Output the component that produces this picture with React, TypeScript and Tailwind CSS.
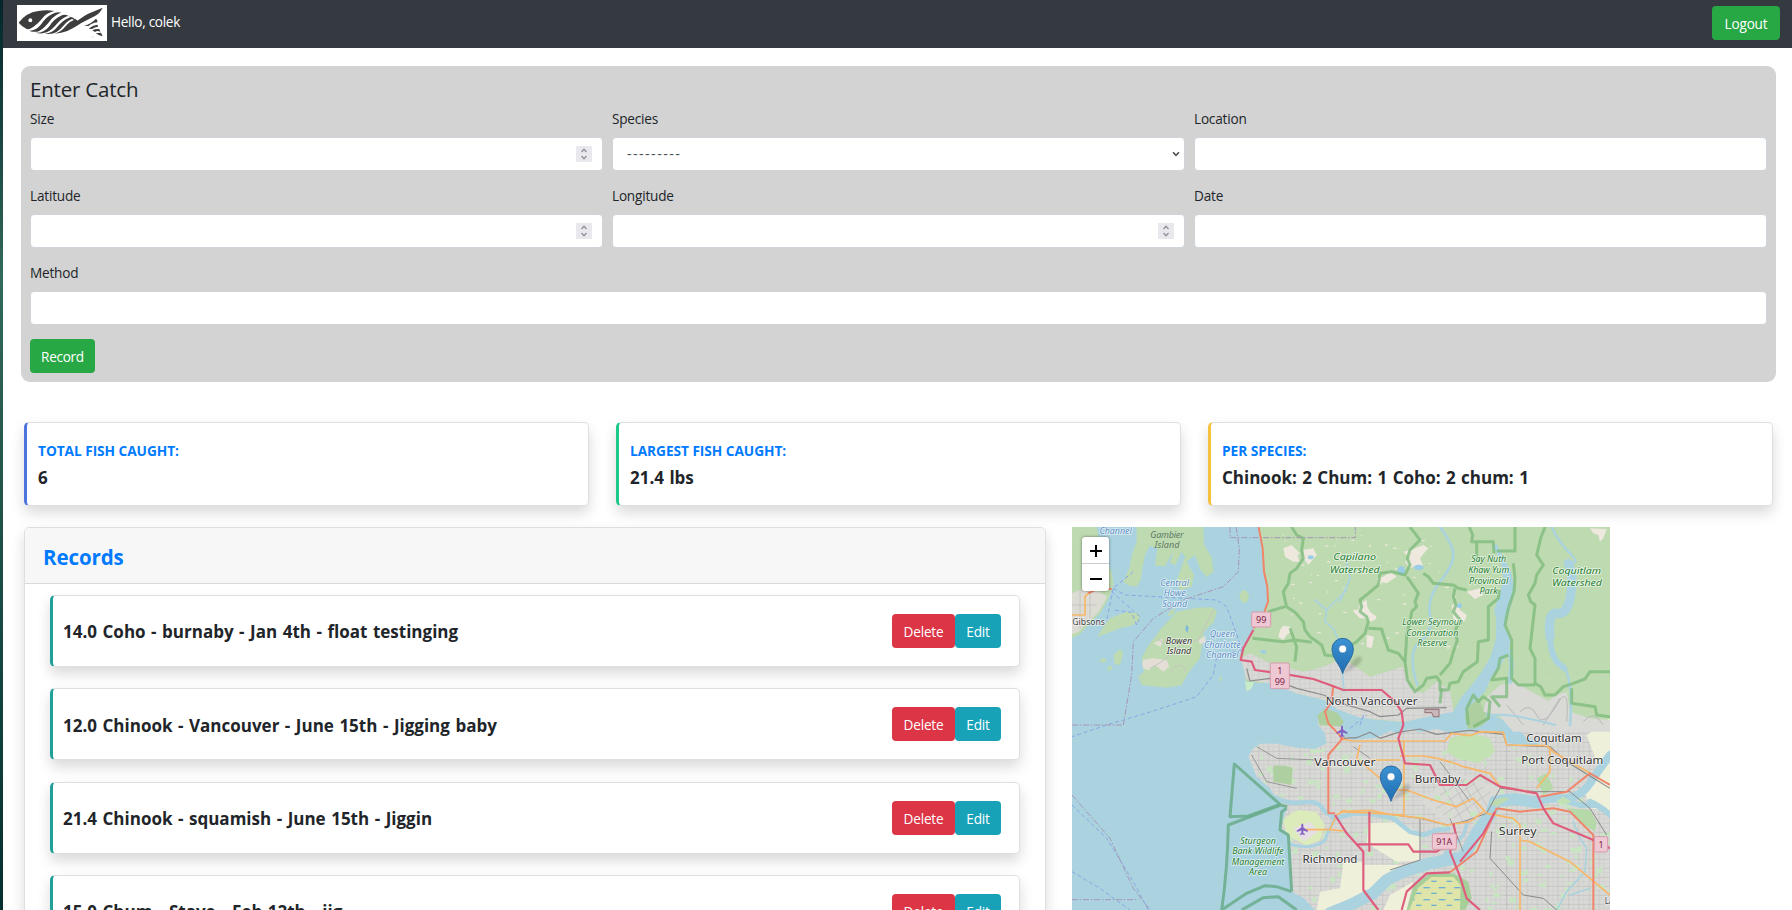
import React from "react";

const forms = {
  label: "text-[13.6px] leading-[22px] tracking-[-0.2px] text-[#212529]",
  input: "mt-[7px] flex h-[34px] items-center rounded-[4px] border border-[#ced4da] bg-white",
};

function Spinner() {
  return (
    <svg className="mr-[10px] ml-auto h-4 w-4 bg-[#e9e9ed]" viewBox="0 0 16 16" fill="none" stroke="#8f8f9d" strokeWidth="1.3">
      <path d="M5.5 6 8 3.3 10.5 6M5.5 10 8 12.7 10.5 10" />
    </svg>
  );
}

function Field({ label, kind = "text", className = "" }: { label: string; kind?: string; className?: string }) {
  return (
    <div className={`h-[77px] ${className}`}>
      <div className={forms.label}>{label}</div>
      <div className={forms.input}>
        {kind === "number" && <Spinner />}
        {kind === "select" && (
          <>
            <span className="pl-[14px] text-[14.4px] tracking-[1.4px] text-[#495057]">---------</span>
            <svg className="mr-[4px] ml-auto h-2 w-2" viewBox="0 0 8 8" fill="none" stroke="#495057" strokeWidth="1.6">
              <path d="M1 2.2 4 5.4 7 2.2" />
            </svg>
          </>
        )}
      </div>
    </div>
  );
}

function Fish() {
  return (
    <svg className="h-9 w-[90px] bg-white" viewBox="51 15 270 108" fill="#3d3d3d">
      <path fillRule="evenodd" d="M56 68Q78 38 115 33Q140 29 163 33Q143 38 131 50Q116 68 107 75Q91 90 80 87Q66 80 56 68ZM97 61a6 6 0 1 0-12 0a6 6 0 1 0 12 0Z" />
      <path d="M87 92Q105 94 121 76Q138 50 157 42Q168 35 184 38Q166 43 152 60Q133 85 119 92Q106 99 87 92Z" />
      <path d="M106 98Q130 100 147 80Q163 55 183 47Q193 42 205 47Q187 53 173 69Q154 92 140 97Q124 103 106 98Z" />
      <path d="M135 101Q158 99 171 82Q188 60 207 53Q215 50 222 55Q205 60 193 74Q176 94 163 99Q150 103 135 101Z" />
      <path d="M164 101Q183 96 194 82Q209 63 228 58L231 63Q254 47 268 40Q291 30 308 23Q300 40 285 48Q265 58 244 69Q218 86 202 93Q184 100 164 101Z" />
      <path d="M205 49Q222 54 233 62L228 66Q219 58 205 49Z" />
      <path d="M252 77Q273 73 287 57Q293 58 292 67Q273 70 266 78ZM266 86Q278 75 293 74L294 80Q284 81 276 87ZM277 91Q285 86 298 87L301 95Q291 91 285 96ZM287 100L303 98L308 109Q298 107 287 100Z" />
      <path d="M272 112l10-3-3 5Z" fill="#ddd" />
    </svg>
  );
}

const stats = [
  { title: "TOTAL FISH CAUGHT:", value: "6", edge: "border-l-[#4e73df]" },
  { title: "LARGEST FISH CAUGHT:", value: "21.4 lbs", edge: "border-l-[#1cc88a]" },
  { title: "PER SPECIES:", value: "Chinook: 2 Chum: 1 Coho: 2 chum: 1", edge: "border-l-[#f6c23e]" },
];

const records = [
  "14.0 Coho - burnaby - Jan 4th - float testinging",
  "12.0 Chinook - Vancouver - June 15th - Jigging baby",
  "21.4 Chinook - squamish - June 15th - Jiggin",
  "15.0 Chum - Stave - Feb 12th - jig",
];

type LabelProps = { x: number; y: number; w: number; t: string; k?: "city" | "green" | "water" | "isle" | "small" };

function MapLabel({ x, y, w, t, k = "city" }: LabelProps) {
  const styles = {
    city: { fill: "#333", size: 32, italic: false },
    green: { fill: "#1f8030", size: 27, italic: true },
    water: { fill: "#5b8fc6", size: 27, italic: true },
    isle: { fill: "#333", size: 27, italic: true },
    small: { fill: "#444", size: 27, italic: false },
  };
  const s = styles[k];
  return (
    <text
      x={x} y={y} textAnchor="middle" textLength={w} lengthAdjust="spacingAndGlyphs" fontSize={s.size}
      fontStyle={s.italic ? "italic" : "normal"} fill={s.fill} stroke="#fff" strokeOpacity="0.65" strokeWidth="5"
      strokeLinejoin="round" paintOrder="stroke"
    >
      {t}
    </text>
  );
}

const labels: LabelProps[] = [
  { x: 137, y: 28, w: 97, t: "Channel", k: "water" },
  { x: 314, y: 183, w: 86, t: "Central", k: "water" },
  { x: 314, y: 214, w: 66, t: "Howe", k: "water" },
  { x: 314, y: 246, w: 75, t: "Sound", k: "water" },
  { x: 457, y: 336, w: 76, t: "Queen", k: "water" },
  { x: 457, y: 368, w: 110, t: "Charlotte", k: "water" },
  { x: 457, y: 400, w: 98, t: "Channel", k: "water" },
  { x: 56, y: 300, w: 98, t: "Gibsons", k: "small" },
  { x: 327, y: 356, w: 79, t: "Bowen", k: "isle" },
  { x: 327, y: 388, w: 74, t: "Island", k: "isle" },
  { x: 854, y: 106, w: 128, t: "Capilano", k: "green" },
  { x: 854, y: 144, w: 150, t: "Watershed", k: "green" },
  { x: 1256, y: 112, w: 105, t: "Say Nuth", k: "green" },
  { x: 1256, y: 144, w: 123, t: "Khaw Yum", k: "green" },
  { x: 1256, y: 176, w: 118, t: "Provincial", k: "green" },
  { x: 1256, y: 208, w: 55, t: "Park", k: "green" },
  { x: 1520, y: 146, w: 146, t: "Coquitlam", k: "green" },
  { x: 1521, y: 184, w: 150, t: "Watershed", k: "green" },
  { x: 1087, y: 300, w: 180, t: "Lower Seymour", k: "green" },
  { x: 1087, y: 332, w: 156, t: "Conservation", k: "green" },
  { x: 1087, y: 363, w: 90, t: "Reserve", k: "green" },
  { x: 564, y: 957, w: 107, t: "Sturgeon", k: "green" },
  { x: 564, y: 988, w: 155, t: "Bank Wildlife", k: "green" },
  { x: 564, y: 1019, w: 158, t: "Management", k: "green" },
  { x: 564, y: 1051, w: 54, t: "Area", k: "green" },
  { x: 905, y: 541, w: 275, t: "North Vancouver" },
  { x: 825, y: 722, w: 184, t: "Vancouver" },
  { x: 1103, y: 773, w: 137, t: "Burnaby" },
  { x: 1452, y: 650, w: 166, t: "Coquitlam" },
  { x: 1477, y: 716, w: 246, t: "Port Coquitlam" },
  { x: 1343, y: 930, w: 113, t: "Surrey" },
  { x: 780, y: 1014, w: 165, t: "Richmond" },
  { x: 1617, y: 1138, w: 26, t: "La", k: "small" },
];

function Shield({ x, y, w, h, lines }: { x: number; y: number; w: number; h: number; lines: string[] }) {
  return (
    <g>
      <rect x={x} y={y} width={w} height={h} rx="4" fill="#eec8d2" stroke="#d59aad" strokeWidth="3" />
      {lines.map((t, i) => (
        <text key={i} x={x + w / 2} y={y + 33 + i * 32} textAnchor="middle" fontSize="27" fill="#7c2547">{t}</text>
      ))}
    </g>
  );
}

function Plane({ x, y }: { x: number; y: number }) {
  return (
    <path
      transform={`translate(${x} ${y}) scale(1.5)`} fill="#8461c4"
      d="M0-11Q2-11 2-7V-3L11 3V6L2 3V8L5 10V12L0 11-5 12V10L-2 8V3L-11 6V3L-2-3V-7Q-2-11 0-11Z"
    />
  );
}

function Marker({ x, y }: { x: number; y: number }) {
  return (
    <g transform={`translate(${x} ${y})`}>
      <path d="M0 0L28-36Q44-56 56-50Q62-38 42-22Z" fill="#000" opacity="0.16" filter="url(#soft)" />
      <path d="M0 0C-8-28-32-45-32-74A32 32 0 0 1 32-74C32-45 8-28 0 0Z" fill="url(#pin)" stroke="#2e6da3" strokeWidth="3" />
      <circle cx="0" cy="-74" r="12" fill="#fff" stroke="#2b73b0" strokeWidth="2" />
    </g>
  );
}

const patches = Array.from({ length: 300 }, (_, i) => ({
  x: 560 + ((i * 379) % 1060),
  y: 660 + ((i * 211 + ((i * i) % 37) * 9) % 495),
  w: 6 + ((i * 7) % 15),
  h: 6 + ((i * 5) % 11),
}));

const cleared = Array.from({ length: 60 }, (_, i) => ({
  x: 640 + ((i * 283) % 540),
  y: 30 + ((i * 97 + ((i * i) % 29) * 11) % 360),
  w: 2 + ((i * 7) % 6),
  h: 2 + ((i * 5) % 5),
}));

const southLand =
  "M535 695L548 672 570 656 620 656 680 668 735 672 770 655 765 625 745 600 745 570 765 560 800 570 815 600 812 628 850 645 880 642 920 638 960 618 985 625 1020 612 1050 622 1100 612 1150 626 1200 615 1270 618 1305 628 1310 655 1400 662 1412 648 1370 640 1345 610 1300 575 1240 560 1252 515 1290 480 1330 470 1620 450V1155H735L700 1118 665 1100 660 960 655 925 635 912 640 880 652 850 630 838 600 790 560 755Z";

function VancouverMap() {
  return (
    <svg className="block h-full w-full" viewBox="6 6 1614 1149" preserveAspectRatio="none" fontFamily="'Noto Sans', sans-serif">
      <defs>
        <pattern id="streets" width="62" height="54" patternUnits="userSpaceOnUse">
          <path d="M0 4H62M8 0V54M38 0V54M0 31H62" fill="none" stroke="#bdbdbd" strokeWidth="2" />
          <path d="M0 17H62M0 44H62M23 0V54M52 0V54" fill="none" stroke="#cdcdcd" strokeWidth="2" />
        </pattern>
        <pattern id="bog" width="46" height="36" patternUnits="userSpaceOnUse">
          <path d="M2 8H22M26 25H42" stroke="#4aa0e0" strokeWidth="3" />
        </pattern>
        <linearGradient id="pin" x1="0" y1="0" x2="0" y2="1">
          <stop offset="0" stopColor="#3c93d4" />
          <stop offset="1" stopColor="#1f6db0" />
        </linearGradient>
        <filter id="soft"><feGaussianBlur stdDeviation="4" /></filter>
        <clipPath id="south"><path d={southLand} /></clipPath>
        <clipPath id="northCity">
          <path d="M512 400L540 385 600 415 700 440 760 425 820 400 850 420 900 455 950 440 1000 425 1020 490 1060 505 1100 470 1140 495 1150 560 1000 590 870 578 800 552 765 525 680 505 600 475 530 465Z" />
        </clipPath>
      </defs>
      <rect width="1630" height="1165" fill="#aad3df" />

      <g fill="#bedab0">
        <path d="M6 6H80L92 62 125 140 131 178 115 222 90 265 60 295 30 327 6 340Z" />
        <path d="M82 336L100 305 120 280 170 261 206 265 210 285 185 302 150 310Z" />
        <path d="M200 6H400L402 58 425 98 430 140 410 156 390 132 375 90 350 110 372 150 365 185 330 195 320 168 345 95 335 80 315 122 300 112 312 75 285 124 255 122 262 70 240 62 225 90 216 135 212 165 200 185 180 182 160 172 178 130 187 85 200 50Z" />
        <path d="M508 215L515 197 528 196 537 212 533 230 518 234ZM290 275L300 258 318 248 310 268ZM130 390L150 372 160 385 150 420 135 418ZM88 405l14-5 8 8-12 6ZM110 430l12-8 6 8-10 8ZM447 460l5-8 4 12-5 8Z" />
        <path d="M215 400L232 367 270 315 320 260 380 248 425 247 441 258 432 290 402 320 390 400 357 440 335 480 290 488 215 480 205 455 222 440Z" />
        <path d="M566 6L578 80 582 140 592 190 592 235 580 270 550 315 530 360 512 385 508 405 530 425 525 468 570 475 600 472 680 505 765 525 810 555 900 582 1000 592 1080 570 1150 557 1175 515 1210 475 1235 440 1262 395 1278 340 1278 280 1272 255 1290 205 1300 160 1292 110 1272 70 1268 60 1280 58 1300 95 1325 145 1332 190 1325 235 1310 280 1305 310 1322 345 1315 380 1290 425 1260 465 1245 500 1215 530 1190 570 1250 560 1330 600 1620 600V6Z" />
      </g>
      <path d="M1192 610L1185 575 1195 545 1225 520 1245 560 1260 580 1235 602 1210 612Z" fill="#aed0a0" />

      <path d={southLand} fill="#d9d9d6" />
      <g clipPath="url(#south)">
        <path d="M1330 440H1620V600L1480 585 1440 530 1330 470Z" fill="#bedab0" />
        <rect x="530" y="600" width="790" height="560" fill="url(#streets)" />
        <rect x="1300" y="600" width="320" height="560" fill="url(#streets)" />
        <path d="M1055 830L1150 740 1290 790 1250 865 1130 900Z" fill="#d9d9d6" />
        <g stroke="#b9b9b9" strokeWidth="2">
          <path d="M1080 830L1190 760M1100 850L1215 775M1120 870L1240 785M1150 880L1262 800M1110 770L1180 890M1140 760L1205 875M1170 755L1230 865M1205 765L1255 850" />
        </g>
        <g fill="#c8e5c2">{patches.map((p, i) => <rect key={i} x={p.x} y={p.y} width={p.w} height={p.h} />)}</g>
        <path d="M895 895L990 892 1050 925 1048 1008 980 1010 890 955ZM820 1010H880V1060H960L900 1080 820 1155H740L750 1100 810 1090ZM1550 630L1620 580V860L1560 850 1545 800 1590 740ZM880 1020H1040L1000 1050 890 1110ZM960 1110L1030 1070 1010 1155H940Z" fill="#eff0da" />
        <path d="M610 722Q640 720 668 728L664 780 610 770Z" fill="#aed0a0" />
        <path d="M640 890Q655 862 690 855L740 862 765 900 750 945 710 962 650 930Z" fill="#dcebba" />
        <path d="M670 910L720 890 745 920 700 950Z" fill="#e6dfe4" />
        <path d="M1140 640L1200 625 1260 640 1275 680 1225 715 1160 700 1130 680Z" fill="#c3e2b4" />
        <path d="M1010 1155L1030 1085 1075 1048 1150 1045 1195 1070 1205 1120 1185 1155Z" fill="#a7cf9a" />
        <path d="M1018 1155L1045 1088 1085 1056 1150 1056 1172 1080 1170 1155Z" fill="#dfe4a8" />
        <path d="M1018 1155L1045 1088 1085 1056 1150 1056 1172 1080 1170 1155Z" fill="url(#bog)" />
        <path d="M1400 760L1430 745 1450 790 1420 810ZM1490 850L1560 855 1580 890 1575 920 1530 890Z" fill="#b5d9a8" />
      </g>
      <path d="M748 600L742 570 765 552 800 562 822 590 812 605Z" fill="#aed0a0" />

      <g clipPath="url(#northCity)">
        <rect x="500" y="380" width="660" height="220" fill="#d9d9d6" />
        <rect x="500" y="380" width="660" height="220" fill="url(#streets)" opacity="0.7" />
      </g>
      <path d="M1300 520L1340 530 1370 550 1410 545 1460 510 1490 500 1500 560 1560 580 1620 585V620H1330L1290 575Z" fill="#d9d9d6" />
      <path d="M1350 560Q1380 530 1400 570T1460 540T1490 590M1310 540L1360 600M1420 600L1470 520M1540 590Q1570 550 1600 600" fill="none" stroke="#b9b9b9" strokeWidth="3" />
      <path d="M6 205L30 195 70 190 112 215 85 262 50 295 25 320 6 328Z" fill="#dcdcd4" />
      <path d="M6 240H80M30 195V310M60 195V280M6 285H55" stroke="#bbb" strokeWidth="2" fill="none" />
      <path d="M218 405L250 400 290 405 298 425 280 440 255 420 235 435 218 430ZM385 345l22-12-2 20-15 4ZM250 355l30-15-8 25Z" fill="#e3ded6" />
      <path d="M240 430Q300 400 340 350M260 340Q290 370 385 345L430 255M300 440Q330 400 350 440" fill="none" stroke="#c6c6c0" strokeWidth="3" />
      <path d="M348 300l8 6-3 18-7-10Z" fill="#7cb9dd" />
      <path d="M525 470L552 472 545 490 530 500Z" fill="#c9ecc8" />

      <g fill="#eee8df">
        {cleared.map((p, i) => <ellipse key={i} cx={p.x} cy={p.y} rx={p.w} ry={p.h} />)}
        <path d="M1000 80L1030 72 1060 60 1075 70 1062 85 1050 100 1060 125 1040 122 1020 130 1005 110 1018 98ZM870 235L890 225 892 245 900 260 920 275 915 285 900 290 885 280 870 280 850 260 866 252ZM920 160L940 155 960 140 980 155 965 165 950 175 938 172 925 185ZM890 330L912 335 905 370 890 365ZM1145 240L1165 235 1170 255 1190 270 1186 285 1170 300 1150 280ZM1190 200L1230 190 1240 210 1215 222ZM640 70L665 60 690 85 682 92 690 110 670 110 645 95ZM700 75L730 70 740 90 715 120 700 100ZM630 315L640 302 660 305 666 318 650 330 640 345 625 335ZM1560 10L1610 12 1600 40 1590 50 1585 30 1570 25Z" />
      </g>
      <g fill="#9ccde6">
        <ellipse cx="994" cy="137" rx="11" ry="13" /><ellipse cx="1046" cy="127" rx="14" ry="8" />
        <ellipse cx="1168" cy="242" rx="8" ry="7" /><ellipse cx="722" cy="97" rx="9" ry="6" /><ellipse cx="580" cy="380" rx="9" ry="5" />
      </g>

      <g fill="none" stroke="#aad3df" strokeLinecap="round" strokeLinejoin="round">
        <path d="M1110 6Q1150 60 1150 90T1110 170 1080 270 1050 350 1042 480" strokeWidth="8" />
        <path d="M1445 6Q1465 50 1500 85T1495 110" strokeWidth="7" />
        <path d="M1495 115Q1512 150 1502 210T1462 265 1440 335" strokeWidth="28" />
        <path d="M1440 335Q1440 380 1460 410L1483 430" strokeWidth="18" />
        <path d="M1485 430Q1510 480 1500 600" strokeWidth="8" />
        <path d="M735 225L770 255 765 290 790 310 805 345M770 255L830 195M818 445L822 500M810 230L840 160 825 90" strokeWidth="5" />
        <path d="M1319 380L1325 420 1320 470" strokeWidth="14" />
        <path d="M1455 600Q1310 560 1250 572" strokeWidth="6" />
        <path d="M618 818Q650 838 700 832T760 855L795 880 850 866 900 866 970 880 1020 920 1060 930 1100 915 1135 912" strokeWidth="14" />
        <path d="M655 955Q690 970 730 962T770 930L795 880" strokeWidth="9" />
        <path d="M1620 690Q1590 730 1560 775T1480 820 1400 830" strokeWidth="24" />
        <path d="M1560 830Q1600 850 1620 870M1480 825L1530 840 1575 840" strokeWidth="18" />
        <path d="M1400 832L1330 822 1275 830Q1265 870 1245 890T1200 960 1160 1000L1080 1015 1000 1040 950 1065 910 1105 840 1140 780 1165" strokeWidth="36" />
        <path d="M1160 1000L1110 1005 1180 930 1190 900" strokeWidth="11" />
        <path d="M1510 890L1530 940 1550 970 1545 1040 1490 1100 1460 1155M1500 1110L1560 1090" strokeWidth="5" />
      </g>
      <path d="M1452 345L1462 322 1472 350 1466 372Z" fill="#bedab0" />
      <path d="M1260 835Q1290 810 1320 820L1280 845Z" fill="#bedab0" />
      <path d="M1460 828L1480 815 1505 830 1480 840Z" fill="#c3e2b4" />

      <g fill="none" stroke="#7bb97b" strokeWidth="9" strokeOpacity="0.75" strokeLinejoin="round">
        <path d="M665 6L680 30 700 40 695 75 700 100 680 130 660 145 655 175 640 200 645 225 650 245 675 262 700 290 705 315 720 335 755 360 765 390 808 395" />
        <path d="M548 340L640 350 675 345 725 352M675 410L680 365 660 310M595 260L645 245" />
        <path d="M1020 6L1035 25 1050 45 1035 60 1020 75 1012 100 1020 120 1005 150 965 140 930 145 925 180 895 205 870 225 875 245 870 260 890 275 895 290 885 325 860 350 835 365" />
        <path d="M895 310L935 312 940 330 955 375 985 385 1005 410 1012 465 1035 500 1060 480 1070 460 1100 455 1110 470 1110 495 1135 495 1140 475 1165 470 1180 440 1222 410 1225 350 1255 345V245L1285 220 1288 195" />
        <path d="M1010 155L1025 175 1045 205 1035 230 1040 245 1025 260 1020 290 1010 330 1008 370 1005 410M1060 145L1075 155 1090 175 1150 180 1165 190 1190 195" />
        <path d="M1155 190L1150 215 1158 240 1150 260 1175 290 1160 305 1155 320 1162 345 1150 380 1140 415 1110 450M1115 490L1110 535" />
        <path d="M1198 6L1208 30 1205 50 1270 50 1272 85M1220 50V95L1230 110M1280 78H1335V6" />
        <path d="M1330 115L1335 160 1332 200 1315 250 1305 300 1325 345V460L1345 480 1395 480" />
        <path d="M1425 6L1412 40 1400 90 1420 120 1400 150 1395 175 1375 210 1382 230 1395 240 1388 300 1380 370 1395 400V475L1412 485 1425 510 1455 510 1480 485 1510 475 1545 462 1560 440 1620 440" />
        <path d="M1505 490V535L1575 545 1580 570 1620 575" />
        <path d="M1315 390L1290 400 1285 430 1265 465 1310 460V515H1265L1290 545M1195 600L1190 550 1210 510 1225 530 1240 515 1260 530 1255 580 1210 605" />
      </g>
      <g fill="none" stroke="#6aab8b" strokeWidth="9" strokeLinejoin="round">
        <path d="M493 717L630 838 535 873 480 875Z" strokeOpacity="0.85" />
        <path d="M455 1155Q472 1040 475 900L632 840 652 845M455 1155L530 1105 585 1082 620 1085 665 1100M650 850L635 860 630 915 655 930 665 1100M515 1155L580 1118 625 1115 680 1155" strokeOpacity="0.85" />
      </g>

      <g fill="none" stroke="#8aa6e6" strokeWidth="3" strokeDasharray="12 8">
        <path d="M190 140L130 190 110 285M130 190L165 210 440 225 470 245 515 370M125 200L210 275 200 300 185 262 130 255" />
        <path d="M515 375L440 395 430 450 380 515 260 555 110 600 6 635M6 840L110 940 190 1070 235 1155M6 1040L90 1090 180 1155M870 600L885 560M840 610L890 570" />
      </g>
      <g fill="none" stroke="#a796b5" strokeWidth="3" strokeDasharray="18 5 5 5">
        <path d="M498 6L508 70 505 140 460 185 340 225 250 280 190 350 185 450 160 600M480 6V38H856V6M6 600H160M6 810L120 940 190 1090 240 1155M6 1124H205" />
      </g>

      <g fill="none" stroke="#8a8a8a" strokeWidth="3.5" strokeLinejoin="round">
        <path d="M530 430L540 468 600 460 680 490 760 510 830 540 900 560 930 575 985 570 1010 550 1130 548" />
        <path d="M820 640L860 638 900 622 930 640 985 622 1050 612 1100 628 1200 616 1300 628 1310 660 1440 665 1490 710 1620 790" />
        <path d="M960 868L1050 880 1130 900 1180 890 1250 865 1290 790M1050 880L1050 1005 960 1035M1290 790L1400 800 1500 800 1560 850 1610 930M1265 920L1260 1000 1310 1055 1360 1110 1420 1120 1460 1155" strokeWidth="3" />
        <path d="M850 665L900 700M1110 710L1200 830M1140 880L1180 980M560 665L620 700 740 705M545 690L590 770 680 790" strokeWidth="2.5" />
        <path d="M1065 553h42v22l-16 0-6-12h-20Z" fill="#c9b9ba" stroke="#9c7b80" />
      </g>
      <g fill="none" stroke="#f8b768" strokeWidth="5" strokeLinejoin="round">
        <path d="M810 642L850 648 1125 648 1145 625 1200 632 1230 620 1300 622 1310 660 1430 662 1450 680 1560 745M870 660L860 700 930 760 960 795 1010 795 1090 825 1160 845 1210 820 1250 865" />
        <path d="M990 693H1060Q1120 700 1180 725L1260 745 1290 785 1380 800M1002 650V870L810 860M900 705H990M810 860L900 856 960 868 1060 880 1130 900 1200 890M1250 865L1330 880 1350 900V1155M1200 890L1240 860M1350 945L1380 950 1500 1010 1620 1110M1440 665L1440 740 1400 790" />
        <path d="M700 914H780L820 918M780 912L800 870 825 855M6 270H45V215L60 200" />
      </g>
      <g fill="none" stroke="#f0856a" strokeWidth="6" strokeLinejoin="round">
        <path d="M566 6L578 70 582 140 592 185 594 230 580 270 550 310M790 480L785 530 765 560 775 595 818 640 775 690V865H795M810 640L818 640M55 205L85 190 125 192" />
        <path d="M1280 850L1350 860 1450 850 1500 860 1570 930V1155M1410 815L1490 800 1560 745 1620 780M1280 850L1220 980 1140 1042" />
      </g>
      <g fill="none" stroke="#de5d7d" strokeWidth="6.5" strokeLinejoin="round">
        <path d="M550 315L520 370 512 405 545 410 555 435 650 448 730 462 780 480 820 495 935 495 975 530 995 560 1000 600 985 640 1005 715 1080 720 1110 780 1190 780 1230 750 1290 785 1400 805 1420 850 1450 895 1570 945 1620 970" />
        <path d="M795 870L830 925 880 980V1095L925 1155M898 860V980M860 958H1015L1030 980H1100L1160 940 1150 895M1160 940L1140 980 1170 1055 1190 1120 1230 1155M1140 1042L1070 1045 1010 1100 995 1155M1275 860L1240 925 1170 1010" />
      </g>

      <text x="291" y="38" textAnchor="middle" textLength="100" fontSize="27" fontStyle="italic" fill="#5f7b66">Gambier</text>
      <text x="291" y="68" textAnchor="middle" textLength="75" fontSize="27" fontStyle="italic" fill="#5f7b66">Island</text>
      <Plane x={816} y={618} />
      <Plane x={697} y={912} />
      {labels.map((l, i) => <MapLabel key={i} {...l} />)}
      <Shield x={545} y={261} w={57} h={45} lines={["99"]} />
      <Shield x={601} y={414} w={57} h={77} lines={["1", "99"]} />
      <Shield x={1087} y={926} w={72} h={47} lines={["91A"]} />
      <Shield x={1573} y={935} w={40} h={46} lines={["1"]} />
      <Marker x={818} y={446} />
      <Marker x={963} y={829} />
    </svg>
  );
}

export default function App() {
  return (
    <div className="flex h-[910px] w-[1792px] overflow-hidden bg-white font-['Open_Sans',sans-serif] text-[#212529]">
      <div className="w-[3px] shrink-0 bg-linear-to-b from-[#04252a] via-[#32695a] via-30% to-[#04302f]" />
      <div className="flex min-w-0 flex-1 flex-col">
        <header className="flex h-12 shrink-0 items-center bg-[#353940] pr-3 pl-[14px]">
          <div className="pb-[2px]"><Fish /></div>
          <span className="ml-1 pb-[3px] text-[13.6px] tracking-[-0.3px] text-white">Hello, colek</span>
          <button className="mt-[6px] mb-2 ml-auto h-[34px] w-[68px] rounded-[4px] bg-[#28a745] pt-[2px] text-[13.6px] tracking-[-0.2px] text-white">Logout</button>
        </header>

        <section className="mt-[18px] ml-[18px] flex h-[316px] w-[1755px] shrink-0 flex-col rounded-[9px] bg-[#d3d3d3] px-[9px]">
          <h4 className="mt-2 h-[34px] text-[20.5px] leading-[30px] tracking-[-0.2px]">Enter Catch</h4>
          <div className="grid w-[1737px] grid-cols-3 gap-x-[9px]">
            <Field label="Size" kind="number" />
            <Field label="Species" kind="select" />
            <Field label="Location" />
            <Field label="Latitude" kind="number" />
            <Field label="Longitude" kind="number" />
            <Field label="Date" />
            <Field label="Method" className="col-span-3" />
          </div>
          <button className="h-[34px] w-[65px] rounded-[4px] bg-[#28a745] pt-[2px] text-[13.6px] tracking-[-0.3px] text-white">Record</button>
        </section>

        <section className="mt-10 ml-[21px] grid w-[1749px] shrink-0 grid-cols-3 gap-x-[27px]">
          {stats.map((s) => (
            <div key={s.title} className={`h-[84px] rounded-[5px] border border-l-[3px] border-[#dfdfdf] ${s.edge} bg-white pt-[17px] pl-[11px] shadow-[0_7px_14px_rgba(0,0,0,0.15)]`}>
              <div className="text-[13.7px] leading-[22px] font-bold tracking-[-0.05px] text-[#007bff]">{s.title}</div>
              <div className="mt-[2px] text-[17px] leading-[27px] font-bold tracking-normal [word-spacing:1px]">{s.value}</div>
            </div>
          ))}
        </section>

        <div className="mt-[21px] ml-[21px] flex">
          <section className="h-[500px] w-[1022px] rounded-[5px] border border-[#dfdfdf] bg-white shadow-[0_7px_14px_rgba(0,0,0,0.15)]">
            <h2 className="flex h-[56px] items-center rounded-t-[4px] border-b border-[#dadada] bg-[#f7f7f7] pt-[4px] pl-[18px] text-[20.5px] font-bold tracking-[-0.1px] text-[#007bff]">Records</h2>
            <div className="flex flex-col gap-[21.4px] pt-[11px] pl-[25px]">
              {records.map((r) => (
                <div key={r} className="flex h-[72px] w-[970px] items-center rounded-[5px] border border-l-[3px] border-[#dfdfdf] border-l-[#20a098] bg-white pr-[18px] pl-[10px] shadow-[0_7px_14px_rgba(0,0,0,0.15)]">
                  <span className="pt-[2px] text-[17px] font-bold tracking-normal [word-spacing:1.1px]">{r}</span>
                  <button className="ml-auto h-[34px] w-[63px] rounded-[4px] bg-[#dc3545] pt-[2px] text-[13.6px] tracking-[-0.2px] text-white">Delete</button>
                  <button className="h-[34px] w-[46px] rounded-[4px] bg-[#17a2b8] pt-[2px] text-[13.6px] tracking-[-0.2px] text-white">Edit</button>
                </div>
              ))}
            </div>
          </section>

          <section className="relative ml-[26px] h-[383px] w-[538px]">
            <VancouverMap />
            <div className="absolute top-[10px] left-[10px] flex w-[27px] flex-col rounded-[3px] bg-white text-black shadow-[0_0_3px_rgba(0,0,0,0.5)]">
              <button className="flex h-[27px] items-center justify-center border-b border-[#ccc] pt-[2px]" aria-label="Zoom in">
                <svg className="h-3 w-3" viewBox="0 0 12 12" stroke="currentColor" strokeWidth="2"><path d="M0 6H12M6 0V12" /></svg>
              </button>
              <button className="flex h-[27px] items-center justify-center pt-[2px]" aria-label="Zoom out">
                <svg className="h-3 w-3" viewBox="0 0 12 12" stroke="currentColor" strokeWidth="2"><path d="M0 6H12" /></svg>
              </button>
            </div>
          </section>
        </div>
      </div>
    </div>
  );
}
